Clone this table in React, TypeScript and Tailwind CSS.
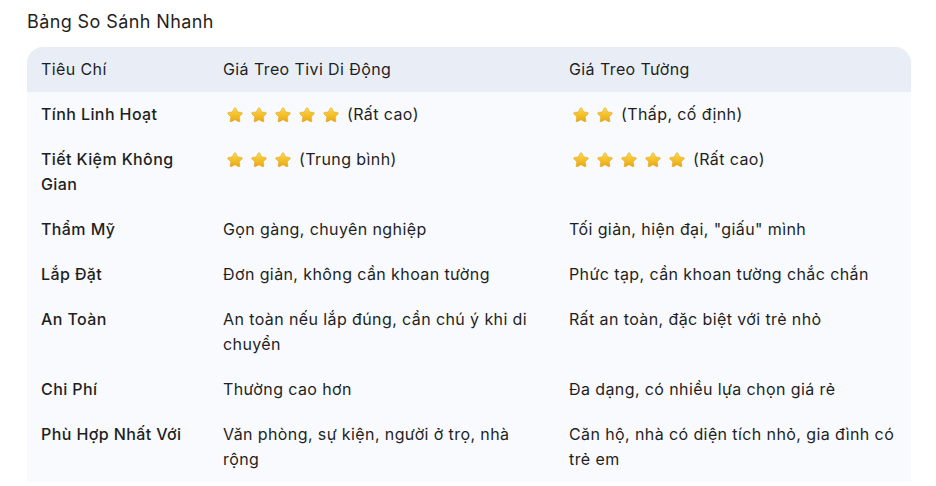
import React from 'react';

type Row = {
  label: string;
  mobile: React.ReactNode;
  wall: React.ReactNode;
};

function Star() {
  return (
    <svg width="18" height="18" viewBox="0 0 24 24" className="block shrink-0">
      <defs>
        <linearGradient id="starFill" x1="0" y1="0" x2="0" y2="1">
          <stop offset="0%" stopColor="#fcd94a" />
          <stop offset="100%" stopColor="#eaa812" />
        </linearGradient>
      </defs>
      <path
        d="M12 2.2c.5 0 .9.3 1.1.7l2.4 4.9 5.4.8c.9.1 1.3 1.3.6 1.9l-3.9 3.8.9 5.4c.2.9-.8 1.6-1.6 1.2L12 18.3l-4.9 2.6c-.8.4-1.8-.3-1.6-1.2l.9-5.4-3.9-3.8c-.7-.6-.3-1.8.6-1.9l5.4-.8 2.4-4.9c.2-.4.6-.7 1.1-.7z"
        fill="url(#starFill)"
        stroke="#d89a10"
        strokeWidth="0.6"
      />
    </svg>
  );
}

function Stars({ count, note }: { count: number; note: string }) {
  return (
    <div className="flex items-center h-[25px]">
      <div className="flex items-center gap-[6px] pl-[3px]">
        {Array.from({ length: count }).map((_, i) => (
          <Star key={i} />
        ))}
      </div>
      <span className="ml-[7px]">{note}</span>
    </div>
  );
}

const rows: Row[] = [
  {
    label: 'Tính Linh Hoạt',
    mobile: <Stars count={5} note="(Rất cao)" />,
    wall: <Stars count={2} note="(Thấp, cố định)" />,
  },
  {
    label: 'Tiết Kiệm Không Gian',
    mobile: <Stars count={3} note="(Trung bình)" />,
    wall: <Stars count={5} note="(Rất cao)" />,
  },
  { label: 'Thẩm Mỹ', mobile: 'Gọn gàng, chuyên nghiệp', wall: 'Tối giản, hiện đại, "giấu" mình' },
  { label: 'Lắp Đặt', mobile: 'Đơn giản, không cần khoan tường', wall: 'Phức tạp, cần khoan tường chắc chắn' },
  {
    label: 'An Toàn',
    mobile: 'An toàn nếu lắp đúng, cần chú ý khi di chuyển',
    wall: 'Rất an toàn, đặc biệt với trẻ nhỏ',
  },
  { label: 'Chi Phí', mobile: 'Thường cao hơn', wall: 'Đa dạng, có nhiều lựa chọn giá rẻ' },
  {
    label: 'Phù Hợp Nhất Với',
    mobile: 'Văn phòng, sự kiện, người ở trọ, nhà rộng',
    wall: 'Căn hộ, nhà có diện tích nhỏ, gia đình có trẻ em',
  },
];

export default function App() {
  return (
    <div
      className="w-[936px] h-[486px] overflow-hidden bg-white text-[#1f1f1f] tracking-[0.025em]"
      style={{ fontFamily: 'Inter, "Noto Sans", Arial, sans-serif' }}
    >
      <div className="pl-[27px] pr-[25px] pt-[9px]">
        <h2 className="text-[18px] leading-[26px] font-normal mb-[12px]">Bảng So Sánh Nhanh</h2>
        <div className="rounded-t-[16px] overflow-hidden bg-[#f8fafd]">
          <table className="w-full border-collapse text-[16px] leading-[25px] table-fixed">
            <colgroup>
              <col className="w-[182px]" />
              <col className="w-[346px]" />
              <col />
            </colgroup>
            <thead>
              <tr className="bg-[#e9eef6]">
                <th className="text-left font-normal pl-[14px] pr-[14px] py-[10px]">Tiêu Chí</th>
                <th className="text-left font-normal pl-[14px] pr-[14px] py-[10px]">Giá Treo Tivi Di Động</th>
                <th className="text-left font-normal pl-[14px] pr-[14px] py-[10px]">Giá Treo Tường</th>
              </tr>
            </thead>
            <tbody>
              {rows.map((r) => (
                <tr key={r.label} className="align-top">
                  <td className="pl-[14px] pr-[14px] py-[10px] font-[450]">{r.label}</td>
                  <td className="pl-[14px] pr-[14px] py-[10px]">{r.mobile}</td>
                  <td className="pl-[14px] pr-[14px] py-[10px]">{r.wall}</td>
                </tr>
              ))}
            </tbody>
          </table>
        </div>
      </div>
    </div>
  );
}
